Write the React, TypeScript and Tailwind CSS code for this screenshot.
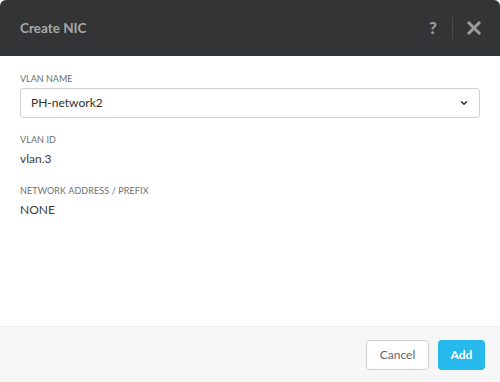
import { ChevronDown } from 'lucide-react';

const font = { fontFamily: 'Lato, "Open Sans", sans-serif' };

function Field({ label, value }: { label: string; value: string }) {
  return (
    <div className="flex flex-col">
      <div className="text-[9px] leading-[12px] uppercase text-[#6b6f73] tracking-[0.1px]">{label}</div>
      <div className="mt-[6px] text-[12px] leading-[14px] text-[#3a3c3f]">{value}</div>
    </div>
  );
}

export default function App() {
  return (
    <div className="w-[500px] h-[382px] bg-white flex flex-col overflow-hidden" style={font}>
      {/* Header */}
      <div className="h-[56px] bg-[#323436] rounded-t-[6px] flex items-center pl-[20px] pr-[14px]">
        <div className="flex-1 text-[13.5px] font-bold text-[#a7a9ab]">Create NIC</div>
        <div className="text-[17px] font-black text-[#9a9c9e] w-[12px] text-center">?</div>
        <div className="w-px h-[22px] bg-[#4a4c4e] ml-[13px] mr-[14px]" />
        <svg width="14" height="14" viewBox="0 0 14 14" className="mr-[5px]">
          <path d="M2 2 L12 12 M12 2 L2 12" stroke="#9a9c9e" strokeWidth="3" strokeLinecap="square" />
        </svg>
      </div>

      {/* Body */}
      <div className="flex-1 px-[20px] pt-[17px] flex flex-col">
        <div className="text-[9px] leading-[12px] uppercase text-[#6b6f73]">VLAN Name</div>
        <div className="mt-[3px] h-[30px] border border-[#cfd1d3] rounded-[3px] flex items-center pl-[10px] pr-[10px]">
          <span className="flex-1 text-[12px] text-[#2e3033]">PH-network2</span>
          <ChevronDown className="w-[10px] h-[10px] text-[#2e3033]" strokeWidth={3.5} />
        </div>
        <div className="mt-[16px] flex flex-col gap-[19px]">
          <Field label="VLAN ID" value="vlan.3" />
          <Field label="Network Address / Prefix" value="NONE" />
        </div>
      </div>

      {/* Footer */}
      <div className="h-[56px] bg-[#f6f6f6] border-t border-[#ececec] flex items-center justify-end gap-[9px] pr-[15px]">
        <button className="h-[30px] w-[63px] bg-white border border-[#cdd0d3] rounded-[4px] text-[12px] text-[#5f6368]">Cancel</button>
        <button className="h-[30px] w-[47px] bg-[#25b9ee] rounded-[4px] text-[12px] font-bold text-white">Add</button>
      </div>
    </div>
  );
}
